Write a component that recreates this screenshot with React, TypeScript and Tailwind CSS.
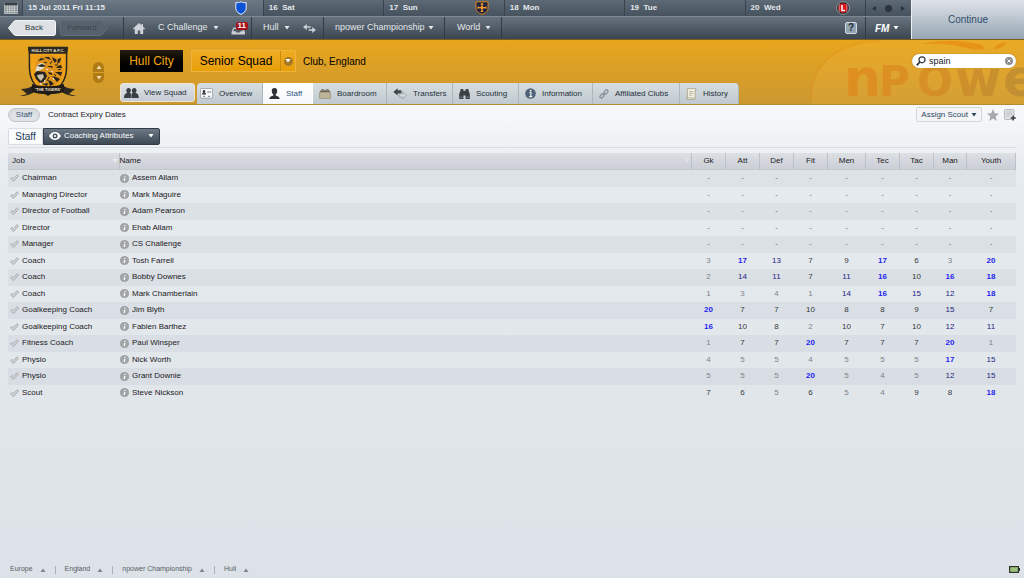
import React from 'react';
import clsx from 'clsx';

interface StaffMember {
  job: string;
  name: string;
  ratings: number[] | null;
}

const attributes = [
  { label: 'Gk', width: 'w-[34px]' },
  { label: 'Att', width: 'w-[34px]' },
  { label: 'Def', width: 'w-[34px]' },
  { label: 'Fit', width: 'w-[34px]' },
  { label: 'Men', width: 'w-[38px]' },
  { label: 'Tec', width: 'w-[34px]' },
  { label: 'Tac', width: 'w-[34px]' },
  { label: 'Man', width: 'w-[33px]' },
  { label: 'Youth', width: 'w-[49px]' },
];

const staff: StaffMember[] = [
  { job: 'Chairman', name: 'Assem Allam', ratings: null },
  { job: 'Managing Director', name: 'Mark Maguire', ratings: null },
  { job: 'Director of Football', name: 'Adam Pearson', ratings: null },
  { job: 'Director', name: 'Ehab Allam', ratings: null },
  { job: 'Manager', name: 'CS Challenge', ratings: null },
  { job: 'Coach', name: 'Tosh Farrell', ratings: [3, 17, 13, 7, 9, 17, 6, 3, 20] },
  { job: 'Coach', name: 'Bobby Downes', ratings: [2, 14, 11, 7, 11, 16, 10, 16, 18] },
  { job: 'Coach', name: 'Mark Chamberlain', ratings: [1, 3, 4, 1, 14, 16, 15, 12, 18] },
  { job: 'Goalkeeping Coach', name: 'Jim Blyth', ratings: [20, 7, 7, 10, 8, 8, 9, 15, 7] },
  { job: 'Goalkeeping Coach', name: 'Fabien Barthez', ratings: [16, 10, 8, 2, 10, 7, 10, 12, 11] },
  { job: 'Fitness Coach', name: 'Paul Winsper', ratings: [1, 7, 7, 20, 7, 7, 7, 20, 1] },
  { job: 'Physio', name: 'Nick Worth', ratings: [4, 5, 5, 4, 5, 5, 5, 17, 15] },
  { job: 'Physio', name: 'Grant Downie', ratings: [5, 5, 5, 20, 5, 4, 5, 12, 15] },
  { job: 'Scout', name: 'Steve Nickson', ratings: [7, 6, 5, 6, 5, 4, 9, 8, 18] },
];

const ratingColor = (value: number) => {
  if (value >= 16) return 'text-[#1f1ff2] font-bold';
  if (value >= 11) return 'text-[#1c1c80]';
  if (value >= 6) return 'text-[#34383b]';
  return 'text-[#7f8386]';
};

const Caret = ({ className, up }: { className?: string; up?: boolean }) => (
  <svg className={clsx('h-1 w-1.5 shrink-0', className)} viewBox="0 0 6 4" fill="currentColor">
    <path d={up ? 'M0.5 4h5L3 0.5z' : 'M0.5 0h5L3 3.5z'} />
  </svg>
);

/* Icons */

const CalendarIcon = () => (
  <svg className="h-3 w-[14px]" viewBox="0 0 14 12">
    <rect x="0.5" y="1" width="13" height="10.5" fill="#7d8487" stroke="#c3c8ca" strokeWidth="0.8" />
    <rect x="0.5" y="0.5" width="13" height="2.5" fill="#3a3f43" />
    <path d="M1 5h12M1 7.2h12M1 9.4h12M3.2 3.5v8M5.6 3.5v8M8 3.5v8M10.4 3.5v8" stroke="#d9dddd" strokeWidth="0.7" />
  </svg>
);

const ShieldIcon = () => (
  <svg className="h-[14px] w-3" viewBox="0 0 12 14">
    <path d="M6 0.7C4.3 1.8 2.4 1.8 0.8 1.6v5.6c0 3 2.4 5 5.2 6.2 2.8-1.2 5.2-3.2 5.2-6.2V1.6C9.6 1.8 7.7 1.8 6 0.7z" fill="#0b52d6" stroke="#e8edf4" strokeWidth="1" />
  </svg>
);

const CrossShieldIcon = () => (
  <svg className="h-[14px] w-[14px]" viewBox="0 0 14 14">
    <path d="M1 0.8h12v6.4c0 3-2.8 5-6 6.2-3.2-1.2-6-3.2-6-6.2z" fill="#1d2340" stroke="#e0851f" strokeWidth="1" />
    <path d="M7 2.5v8.5M2.8 6.6h8.4M5.7 3h2.6M5.7 10.4h2.6M3.2 5.4v2.4M10.8 5.4v2.4" stroke="#f09a2c" strokeWidth="1.3" />
    <circle cx="7" cy="6.6" r="1.6" fill="#f09a2c" />
  </svg>
);

const RoundBadgeIcon = () => (
  <svg className="h-[14px] w-[14px]" viewBox="0 0 14 14">
    <circle cx="7" cy="7" r="6.4" fill="#24282c" stroke="#b9bfc3" strokeWidth="0.7" />
    <circle cx="7" cy="7" r="4.8" fill="#d5171e" />
    <path d="M3.2 3v8M10.8 3v8" stroke="#d7a9aa" strokeWidth="0.7" />
    <path d="M6 4v5.6h3" stroke="#fff" strokeWidth="1.5" fill="none" />
  </svg>
);

const HomeIcon = () => (
  <svg className="h-[11px] w-3" viewBox="0 0 12 11" fill="#cdd3d8">
    <path d="M6 0L0 5.6l0.8 0.9L1.8 5.7V11h3V7.5h2.4V11h3V5.7l1 0.8 0.8-0.9-2-1.9V1H8.5v1.3z" />
  </svg>
);

const InboxIcon = () => (
  <svg className="h-2 w-[15px]" viewBox="0 0 15 8">
    <path d="M2.5 0.5h9l2.5 4.5v2.6H0.5V5z" fill="#c9cfd5" />
    <path d="M3.4 1.8h7.2l1.4 2.4H9.5L8.8 5.5H5.4L4.8 4.2H2z" fill="#535d68" />
  </svg>
);

const SwapIcon = () => (
  <svg className="h-[9px] w-[13px]" viewBox="0 0 13 9" fill="#c9d0d7">
    <path d="M3.8 0v2.2h4v1.6h-4V6L0 3z" />
    <path d="M9.2 3v2.2h-3.6v1.6h3.6V9L13 6z" />
  </svg>
);

const SquadIcon = () => (
  <svg className="h-[10px] w-[15px]" viewBox="0 0 15 10" fill="#3a3f44">
    <ellipse cx="4.6" cy="2.6" rx="2.3" ry="2.6" />
    <ellipse cx="10.2" cy="2.6" rx="2.3" ry="2.6" />
    <path d="M0 10c0-3 1.2-4.6 3-5h3c1.6 0.4 1.8 2.4 1.8 5z" />
    <path d="M7.2 10c0-3 0.2-4.600 1.600-5h3c1.800 0.400 3 2 3 5z" />
    <path d="M7.3 5.5V10" stroke="#b5bbc0" strokeWidth="0.5" />
  </svg>
);

const OverviewIcon = () => (
  <svg className="h-[11px] w-[13px]" viewBox="0 0 13 11">
    <rect x="0.4" y="0.4" width="12.2" height="9.8" rx="1.2" fill="#f7f8f9" stroke="#8d9499" strokeWidth="0.8" />
    <circle cx="4" cy="3.2" r="1.2" fill="#30353a" />
    <path d="M2 6.6c0-1.8 1-2.3 2-2.3s2 0.5 2 2.3z" fill="#30353a" />
    <path d="M7.2 4h4" stroke="#70777c" strokeWidth="1" />
    <path d="M3 8.4h2M8 8.4h2" stroke="#8a9196" strokeWidth="1.2" />
  </svg>
);

const PersonIcon = () => (
  <svg className="h-[11px] w-[11px]" viewBox="0 0 11 11" fill="#2d3237">
    <path d="M5.5 0C3.4 0 2.7 1.2 2.8 2.9c0.1 1.6 0.8 2.9 1.5 3.5v1C2.8 8 0.5 8.2 0.3 11h10.4C10.5 8.2 8.2 8 6.7 7.4v-1c0.7-0.6 1.4-1.9 1.5-3.5C8.3 1.2 7.6 0 5.5 0z" />
  </svg>
);

const BoardroomIcon = () => (
  <svg className="h-[10px] w-3" viewBox="0 0 12 10">
    <path d="M2.6 2V0.7h2.4V2M7 2V0.7h2.4V2" fill="none" stroke="#6f6b5a" strokeWidth="0.9" />
    <path d="M1.6 1.8h8.8L11.6 4v5.5H0.4V4z" fill="#bbb498" stroke="#8c876d" strokeWidth="0.6" />
    <path d="M1.6 1.8h8.8L11 3.2H1z" fill="#625f4e" />
  </svg>
);

const TransfersIcon = () => (
  <svg className="h-[11px] w-[14px]" viewBox="0 0 14 11">
    <path d="M4.6 0.2v2H8.4v3.4H4.6v2L0.3 3.9z" fill="#40464b" />
    <path d="M9.6 3.8v2H6.2V9h3.4v1.8l4-3.5z" fill="#d5dadd" stroke="#858c91" strokeWidth="0.6" />
  </svg>
);

const ScoutingIcon = () => (
  <svg className="h-[11px] w-[11px]" viewBox="0 0 11 11" fill="#3b4045">
    <path d="M1.5 1h2.8v1.8h2.4V1h2.8v1.5L10.8 6v5H6.6V7.6H4.4V11H0.2V6l1.3-3.5z" />
    <path d="M1.2 9.2h2.2M7.6 9.2h2.2" stroke="#8d959b" strokeWidth="0.9" />
  </svg>
);

const InfoIcon = () => (
  <svg className="h-[11px] w-[11px]" viewBox="0 0 11 11">
    <circle cx="5.5" cy="5.5" r="5.3" fill="#4e6278" />
    <circle cx="5.7" cy="2.7" r="0.9" fill="#fff" />
    <path d="M4.4 4.7h1.5v3.8M4.2 8.6h3" stroke="#fff" strokeWidth="1.1" fill="none" />
  </svg>
);

const ChainIcon = () => (
  <svg className="h-[10px] w-[10px]" viewBox="0 0 10 10" fill="none" stroke="#8b9298" strokeWidth="1.3">
    <rect x="-2.4" y="-1.4" width="4.8" height="2.8" rx="1.4" transform="translate(6.9 3) rotate(-50)" />
    <rect x="-2.4" y="-1.4" width="4.8" height="2.8" rx="1.4" transform="translate(3 6.9) rotate(-50)" />
    <path d="M4 6l2-2" />
  </svg>
);

const HistoryIcon = () => (
  <svg className="h-3 w-[11px]" viewBox="0 0 11 12">
    <path d="M1.2 0.6h8.6v2.2H9v8.6H0.6V9.6h1z" fill="#f3efdf" stroke="#a59f88" strokeWidth="0.8" />
    <path d="M3.2 3.6h4M3.2 5.4h4M3.2 7.2h3" stroke="#a39d88" strokeWidth="0.7" />
    <path d="M0.6 9.8h6.6v1.6" fill="none" stroke="#a59f88" strokeWidth="0.7" />
  </svg>
);

const EyeIcon = () => (
  <svg className="h-2 w-3 shrink-0" viewBox="0 0 12 8">
    <path d="M0 4C1.6 1.4 3.6 0 6 0s4.4 1.4 6 4c-1.6 2.6-3.6 4-6 4S1.6 6.6 0 4z" fill="#fff" />
    <circle cx="6" cy="4" r="2.5" fill="#45525f" />
    <circle cx="6" cy="4" r="1.1" fill="#fff" />
  </svg>
);

const TickIcon = () => (
  <svg className="h-2 w-[9px] shrink-0" viewBox="0 0 9 8">
    <path d="M0.5 4.8L1.9 3.4 3.4 4.7 7 0.7 8.5 2 3.9 7.3H3.1z" fill="#d0d4d7" stroke="#a0a5a9" strokeWidth="0.8" />
  </svg>
);

const RowInfoIcon = () => (
  <svg className="h-[9px] w-[9px] shrink-0" viewBox="0 0 9 9">
    <circle cx="4.5" cy="4.5" r="4.1" fill="#a2a6a9" stroke="#8c9093" strokeWidth="0.6" />
    <path d="M5.1 1.8L4.9 2.9M4.8 3.8L4.1 7" stroke="#fff" strokeWidth="1.2" />
  </svg>
);

const ClubCrest = () => (
  <svg className="h-[52px] w-14" viewBox="0 0 56 52" role="img" aria-label="Hull City crest">
    <path d="M9 2h38c-1 8 0 14-0.6 22C45.8 34 40 43 28 49 16 43 10.2 34 9.6 24 9 16 10 10 9 2z" fill="#f0a31a" stroke="#2a2620" strokeWidth="1.5" />
    <path d="M8 0.8h40l-1 7H9z" fill="#2a2620" />
    <text x="28" y="6" textAnchor="middle" fontSize="4" fontWeight="700" fill="#efe6cf" fontFamily="Liberation Sans">HULL CITY A.F.C.</text>
    {/* tiger head */}
    <path d="M17 13c2-4 6-4 8-3 4-2 9-1 12 2l5-1-1 5c3 4 3 9 1 13l-2 6-5 4c-3 2-7 3-11 2l-6-4-4-7 3-4-2-6z" fill="#e0941c" />
    <path d="M16 22c1-3 3-5 6-5l3 2-2 4-5 2-2 3z" fill="#e3ddcc" />
    <path d="M14 28l3-3 8 1 2 4-3 6-4 1-4-4z" fill="#27231e" />
    <path d="M17 29l6-1 1 3-3 4-3-3z" fill="#c9bfad" />
    <path d="M18 15l3-3 4 1-3 1zM24 11l5 0 2 3-3-1zM32 11l5 3-2 3-2-3zM38 13l3-1-1 4-3 2zM41 19l1 3-6 0 2-2zM42 26l-1 4-6-4zM40 33l-3 3-5-6 4 1zM34 38l-4 2-2-6 3 1zM27 20l5 0 1 2-4-1zM17 20l5-2 4 2-4 1zM28 26l4 1 0 2-3-1zM22 38l6-1-1 3z" fill="#27231e" />
    <path d="M35 19l3 0M30 18l2-3M34 28l2 2M29 31l-2 4M24 16l3 1M38 24l3-1" stroke="#27231e" strokeWidth="1" />
    <path d="M20 37l2 2M31 25l2 1M25 34l-1 3M33 32l1 2M26 23l2 1" stroke="#e5dcc8" strokeWidth="1.2" />
    {/* ribbon */}
    <path d="M0 50l7-2-6-5c5 0 8-1 13-4v7c-3 2-7 4-14 4zM56 50l-7-2 6-5c-5 0-8-1-13-4v7c3 2 7 4 14 4z" fill="#2a2620" />
    <path d="M12 38c10 3 22 3 32 0v8c-10 3-22 3-32 0z" fill="#1f1c18" />
    <text x="28" y="45" textAnchor="middle" fontSize="4" fontWeight="700" fill="#efe6cf" fontFamily="Liberation Sans">'THE TIGERS'</text>
  </svg>
);

const SponsorMark = () => (
  <svg className="absolute top-0 right-0 h-20 w-[224px] overflow-visible" viewBox="0 0 224 80" aria-hidden="true">
    <defs>
      <linearGradient id="sponsorInk" gradientUnits="userSpaceOnUse" x1="46" x2="224" y1="20" y2="60">
        <stop offset="0" stopColor="#e28a1c" />
        <stop offset="0.5" stopColor="#d68c24" />
        <stop offset="1" stopColor="#b98b35" />
      </linearGradient>
    </defs>
    <path d="M12 64C8 26 40 2 80 0h144v64z" fill="#f3bd4b" opacity="0.2" />
    <path d="M12 60C8 26 36 3 80 1" fill="none" stroke="#e0901c" strokeWidth="2" opacity="0.3" />
    <path d="M120 4c20-4 44-4 62 1l3 4c-7 1-13 1-18-1-14-4-30-5-47-4z" fill="#e58c14" opacity="0.75" />
    <path d="M194 9c2-4 6-7 13-7-2 4-6 7-13 7z" fill="#e58c14" opacity="0.75" />
    <g fill="url(#sponsorInk)" opacity="0.8" fontWeight="700" fontFamily="DejaVu Sans">
      <text x="44" y="56" fontSize="52">n</text>
      <text x="79" y="56" fontSize="42">P</text>
      <text x="117" y="56" fontSize="42">O</text>
      <text x="155" y="56" fontSize="50">w</text>
      <text x="203" y="56" fontSize="52">e</text>
    </g>
  </svg>
);

/* Page sections */

const days = [
  { label: '16 Sat', badge: null },
  { label: '17 Sun', badge: <CrossShieldIcon /> },
  { label: '18 Mon', badge: null },
  { label: '19 Tue', badge: null },
  { label: '20 Wed', badge: <RoundBadgeIcon /> },
];

const tabs = [
  { label: 'Overview', icon: <OverviewIcon />, width: 'w-[66px]' },
  { label: 'Staff', icon: <PersonIcon />, width: 'w-[50px]', active: true },
  { label: 'Boardroom', icon: <BoardroomIcon />, width: 'w-[74px]' },
  { label: 'Transfers', icon: <TransfersIcon />, width: 'w-[66px]' },
  { label: 'Scouting', icon: <ScoutingIcon />, width: 'w-[66px]' },
  { label: 'Information', icon: <InfoIcon />, width: 'w-[74px]' },
  { label: 'Affiliated Clubs', icon: <ChainIcon />, width: 'w-[87px]' },
  { label: 'History', icon: <HistoryIcon />, width: 'w-[59px]' },
];

const TopBar = () => (
  <header className="flex h-10 border-b border-[#7a5c1c] bg-[#414c58] text-[#e4e8ec]">
    <div className="flex min-w-0 flex-1 flex-col">
      <div className="grid h-4 grid-cols-[23px_2fr_1fr_1fr_1fr_1fr_1fr_45px] bg-linear-to-b from-[#5d6a76] to-[#46525d] text-[8px] leading-4 font-bold">
        <button aria-label="Calendar" className="flex items-center justify-center border-r border-[#39434d]">
          <CalendarIcon />
        </button>
        <div className="flex items-center justify-between border-r border-[#39434d] bg-linear-to-b from-[#6d7a86] to-[#566370] pr-4 pl-[5px]">
          <span>15 Jul 2011 Fri 11:15</span>
          <ShieldIcon />
        </div>
        {days.map((day) => (
          <div key={day.label} className="flex items-center justify-between border-r border-[#39434d] pr-[15px] pl-[5px]">
            <span className="whitespace-pre">{day.label.replace(' ', '  ')}</span>
            {day.badge}
          </div>
        ))}
        <div className="flex items-center justify-center gap-[9px] text-[#2b333b]">
          <svg className="h-[5px] w-1" viewBox="0 0 4 5" fill="currentColor"><path d="M4 0v5L0 2.5z" /></svg>
          <span className="size-[7px] rounded-full bg-current" />
          <svg className="h-[5px] w-1" viewBox="0 0 4 5" fill="currentColor"><path d="M0 0v5l4-2.5z" /></svg>
        </div>
      </div>

      <nav className="flex h-[23px] items-stretch border-t border-[#7d8893] bg-linear-to-b from-[#66727e] to-[#3c4650] text-[9px]">
        <div className="flex w-[124px] items-center gap-1 border-r border-[#323b44] pl-2 text-[8px]">
          <button className="relative h-4 w-12 text-[#30363c]">
            <svg className="absolute inset-0 h-full w-full" viewBox="0 0 48 16">
              <path d="M8 0.5h37.5q2 0 2 2v11q0 2-2 2H8Q6 15.5 4.5 13L0.5 8l4-5Q6 0.5 8 0.5z" fill="#dde1e5" stroke="#f5f7f8" />
            </svg>
            <span className="relative pl-1">Back</span>
          </button>
          <button className="relative h-4 w-12 text-[#3b444d]" disabled>
            <svg className="absolute inset-0 h-full w-full" viewBox="0 0 48 16">
              <path d="M40 0.5H2.5q-2 0-2 2v11q0 2 2 2H40q2 0 3.5-2.5L47.5 8l-4-5Q42 0.5 40 0.5z" fill="#56616c" stroke="#606c77" />
            </svg>
            <span className="relative pr-1">Forward</span>
          </button>
        </div>
        <div className="flex w-[128px] items-center border-r border-[#323b44] pl-[9px]">
          <a href="#home" aria-label="Home"><HomeIcon /></a>
          <button className="ml-[13px] flex items-center gap-[5px]">C Challenge <Caret /></button>
          <button className="relative ml-3 pt-[5px]" aria-label="Inbox, 11 unread">
            <InboxIcon />
            <span className="absolute top-0 left-[5px] rounded-[2px] bg-[#a3131c] px-0.5 text-[8px] leading-2 font-bold text-white">11</span>
          </button>
        </div>
        <div className="flex w-[72px] items-center border-r border-[#323b44] pl-[11px]">
          <button className="flex items-center gap-[5px]">Hull <Caret /></button>
          <button className="ml-[13px]" aria-label="Switch team"><SwapIcon /></button>
        </div>
        <button className="flex w-[121px] items-center gap-[3px] border-r border-[#323b44] pl-[11px] whitespace-nowrap">
          npower Championship <Caret />
        </button>
        <button className="flex w-[57px] items-center gap-[5px] border-r border-[#323b44] pl-3">World <Caret /></button>
        <div className="flex flex-1 items-center justify-end border-r border-[#323b44] pr-2">
          <button className="size-3 rounded-[2px] border border-[#d1d9df] bg-[#93a4b1] text-[10px] leading-[10px] font-bold text-[#222c35]">?</button>
        </div>
        <button className="flex w-[45px] items-center gap-1 pl-[9px] text-[10px] font-bold text-white italic">
          FM <Caret />
        </button>
      </nav>
    </div>
    <button className="w-[113px] border-l border-[#eef1f3] bg-linear-to-b from-[#dfe3e8] to-[#97a6b4] text-[10px] text-[#2f4d6d]">
      Continue
    </button>
  </header>
);

const ClubBanner = () => (
  <section className="relative flex h-[65px] overflow-x-clip border-b border-[#b98a2d] bg-linear-to-b from-[#e8a61b] to-[#cb972f]">
    <SponsorMark />
    <div className="flex w-[120px] shrink-0 items-start pt-[6px] pl-5">
      <ClubCrest />
      <div className="mt-4 ml-[17px] flex flex-col gap-px text-[#f3dfae]">
        <button aria-label="Previous club" className="flex h-[10px] w-[11px] items-center justify-center rounded-t-full bg-[#b07a14]">
          <Caret up />
        </button>
        <button aria-label="Next club" className="flex h-[10px] w-[11px] items-center justify-center rounded-b-full bg-[#b07a14]">
          <Caret />
        </button>
      </div>
    </div>

    <div className="flex min-w-0 flex-1 flex-col justify-between pt-[10px]">
      <div className="flex items-center">
        <h1 className="w-[63px] bg-linear-to-b from-[#231d10] to-black text-center text-[12px] leading-[22px] text-[#f2a916]">Hull City</h1>
        <div className="ml-2 flex h-[22px] w-[105px] items-center border border-[#efb340] bg-linear-to-b from-[#f0ac22] to-[#e79e07] text-[12px] text-black">
          <span className="flex-1 border-r border-[#c98d12] text-center leading-5">Senior Squad</span>
          <button aria-label="Choose squad" className="flex h-full w-[14px] items-center justify-center">
            <span className="flex size-[9px] items-center justify-center rounded-full bg-[#a67a25] text-white"><Caret /></span>
          </button>
        </div>
        <span className="ml-[7px] text-[10px] text-black">Club, England</span>
      </div>

      <div className="flex items-stretch text-[8px] text-[#25303a]">
        <a href="#squad" className="mb-0.5 flex h-[19px] w-[75px] items-center gap-[5px] rounded-[3px] border border-[#efe6d2] bg-linear-to-b from-[#dfe3e7] to-[#c5ccd3] pl-[3px] whitespace-nowrap">
          <SquadIcon /> View Squad
        </a>
        <nav className="ml-0.5 flex">
          {tabs.map((tab) => (
            <a
              key={tab.label}
              href={'#' + tab.label.toLowerCase().replace(' ', '-')}
              className={clsx(
                'flex h-[21px] items-center gap-[6px] whitespace-nowrap border-r pl-[6px] first:rounded-tl-[4px] first:pl-[3px] last:rounded-tr-[4px]',
                tab.width,
                tab.active
                  ? 'border-white bg-linear-to-b from-white to-[#f6f7f9] text-[#2f5580]'
                  : 'border-[#adb6bd] bg-linear-to-b from-[#d7dee1] to-[#bfc9cf]'
              )}
            >
              {tab.icon}
              {tab.label}
            </a>
          ))}
        </nav>
      </div>
    </div>

    <label className="relative mt-[14px] mr-2 flex h-[14px] w-[104px] items-center gap-[3px] rounded-full bg-white pr-[3px] pl-1 shadow-[0_0_1px_#7a5c1c]">
      <svg className="h-[10px] w-[10px] shrink-0" viewBox="0 0 10 10" fill="none" stroke="#2e3338">
        <circle cx="6" cy="3.8" r="3" strokeWidth="1.2" />
        <path d="M3.8 6L0.8 9.3" strokeWidth="1.8" />
      </svg>
      <input aria-label="Search" defaultValue="spain" className="w-0 min-w-0 flex-1 text-[9px] leading-3 text-[#202428] outline-none" />
      <button aria-label="Clear search" className="shrink-0">
        <svg className="size-2" viewBox="0 0 8 8">
          <circle cx="4" cy="4" r="4" fill="#8a8d90" />
          <path d="M2.4 2.4l3.2 3.2M5.6 2.4L2.4 5.6" stroke="#fff" strokeWidth="1" />
        </svg>
      </button>
    </label>
  </section>
);

const SubNav = () => (
  <div className="flex h-[19px] items-center text-[8px] text-[#1d2226]">
    <a href="#staff" className="mr-2 w-8 rounded-full border border-[#c1c6cb] bg-[#dfe2e6] text-center leading-3 text-[#3a5674] shadow-inner">Staff</a>
    <a href="#contracts">Contract Expiry Dates</a>
    <div className="ml-auto flex items-center gap-[5px]">
      <button className="flex h-[15px] items-center gap-[3px] rounded-[2px] border border-[#d3d7dc] bg-[#f3f5f7] px-1 text-[#2d4763]">
        Assign Scout <Caret />
      </button>
      <button aria-label="Add to shortlist">
        <svg className="size-3" viewBox="0 0 12 12" fill="#a5aaae">
          <path d="M6 0l1.7 4.2L12 4.5 8.7 7.4 9.7 12 6 9.5 2.3 12l1-4.6L0 4.5l4.3-0.3z" />
        </svg>
      </button>
      <button aria-label="Add note">
        <svg className="size-3" viewBox="0 0 12 12">
          <rect x="0.5" y="0.5" width="9.5" height="10" rx="0.8" fill="#dfe2e4" stroke="#a9aeb2" strokeWidth="0.8" />
          <path d="M2.3 3h6M2.3 5h6M2.3 7h3.5" stroke="#b2b7ba" strokeWidth="0.8" />
          <path d="M9.2 6.5v5M6.7 9h5" stroke="#33383c" strokeWidth="1.4" />
        </svg>
      </button>
    </div>
  </div>
);

const ViewPicker = () => (
  <div className="mt-[3px] flex h-[18px] items-center">
    <div className="flex h-[17px] w-[35px] items-center justify-center rounded-l-[2px] border border-[#d9dde1] bg-[#fafbfc] text-[10px] text-[#1f3a57]">Staff</div>
    <button className="flex h-[17px] w-[117px] items-center gap-[3px] rounded-r-[2px] border border-[#333d47] bg-linear-to-b from-[#6d7a87] to-[#3d4954] px-[5px] text-[8px] whitespace-nowrap text-white">
      <EyeIcon />
      Coaching Attributes
      <Caret className="ml-auto" />
    </button>
  </div>
);

const StaffTable = () => (
  <table className="w-full table-fixed border-collapse text-[8px] leading-4 text-[#1c2024]">
    <thead>
      <tr className="h-4 border-b border-[#c3c8cf] bg-linear-to-b from-[#dcdfe4] to-[#cbcfd6]">
        <th className="w-[111px] border-r border-[#bcc1c8] p-0 pl-1 text-left font-normal">
          <span className="flex items-center justify-between pr-px">Job <Caret className="text-[#eceef1]" /></span>
        </th>
        <th className="border-r border-[#bcc1c8] p-0 text-left font-normal">
          <span className="flex items-center justify-between pr-px">Name <Caret className="text-[#dfe2e7]" /></span>
        </th>
        {attributes.map((attribute) => (
          <th key={attribute.label} className={clsx('border-r border-[#bcc1c8] p-0 font-normal', attribute.width)}>
            {attribute.label}
          </th>
        ))}
      </tr>
    </thead>
    <tbody>
      {staff.map((member) => (
        <tr key={member.name} className="odd:h-[17px] odd:bg-[#8c98a0]/10 even:h-4">
          <td className="p-0 pl-[2px]">
            <span className="flex items-center gap-[3px] whitespace-nowrap"><TickIcon />{member.job}</span>
          </td>
          <td className="p-0 pl-px">
            <span className="flex items-center gap-[3px]"><RowInfoIcon />{member.name}</span>
          </td>
          {attributes.map((attribute, i) => (
            <td
              key={attribute.label}
              className={clsx('p-0 text-center', member.ratings ? ratingColor(member.ratings[i]) : 'text-[#6f7376]')}
            >
              {member.ratings ? member.ratings[i] : '-'}
            </td>
          ))}
        </tr>
      ))}
    </tbody>
  </table>
);

const Footer = () => (
  <footer className="mt-auto flex h-[17px] items-center justify-between pr-1 pl-[10px] text-[7px] text-[#555d66]">
    <nav className="flex items-center gap-[9px]">
      {['Europe', 'England', 'npower Championship', 'Hull'].map((item, i) => (
        <React.Fragment key={item}>
          {i > 0 && <span className="h-2 w-px bg-[#aab0b7]" />}
          <button className="flex items-center gap-[7px]">
            {item} <Caret up className="text-[#7f868d]" />
          </button>
        </React.Fragment>
      ))}
    </nav>
    <svg className="h-[7px] w-[11px]" viewBox="0 0 11 7">
      <rect x="0.6" y="0.6" width="8.8" height="5.8" fill="#9cc47c" stroke="#2f352e" strokeWidth="1.2" />
      <rect x="9.8" y="2" width="1.2" height="3" fill="#2f352e" />
    </svg>
  </footer>
);

export default function App() {
  return (
    <div className="flex min-h-screen flex-col bg-[#e2e7eb] font-['Liberation_Sans',Arial,sans-serif]">
      <TopBar />
      <ClubBanner />
      <main className="flex flex-1 flex-col bg-linear-to-b from-[#f8f9fb] via-[#e6ebef] via-15% to-[#dde2e8]">
        <div className="px-2">
          <SubNav />
          <ViewPicker />
          <div className="mt-[2px] mb-[5px] border-t border-[#dadee2]" />
          <StaffTable />
        </div>
        <Footer />
      </main>
    </div>
  );
}
